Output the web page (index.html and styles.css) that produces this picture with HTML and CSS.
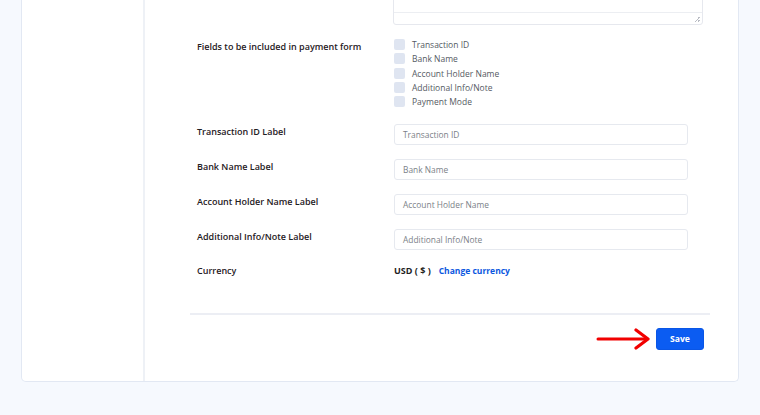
FILE: index.html
```html
<!DOCTYPE html>
<html>
<head>
<meta charset="utf-8">
<link rel="stylesheet" href="styles.css">
</head>
<body>
<div class="card">
  <div class="sidebar"></div>
  <div class="main">
    <div class="row row-ta">
      <div class="label"></div>
      <div class="field">
        <div class="ta">
          <div class="ta-top"></div>
          <div class="ta-bottom"><span class="grip"></span></div>
        </div>
      </div>
    </div>
    <div class="row row-checks">
      <div class="label">Fields to be included in payment form</div>
      <div class="field checks">
        <label class="check"><span class="box"></span>Transaction ID</label>
        <label class="check"><span class="box"></span>Bank Name</label>
        <label class="check"><span class="box"></span>Account Holder Name</label>
        <label class="check"><span class="box"></span>Additional Info/Note</label>
        <label class="check"><span class="box"></span>Payment Mode</label>
      </div>
    </div>
    <div class="row row-input">
      <div class="label">Transaction ID Label</div>
      <div class="field"><div class="input">Transaction ID</div></div>
    </div>
    <div class="row row-input">
      <div class="label">Bank Name Label</div>
      <div class="field"><div class="input">Bank Name</div></div>
    </div>
    <div class="row row-input">
      <div class="label">Account Holder Name Label</div>
      <div class="field"><div class="input">Account Holder Name</div></div>
    </div>
    <div class="row row-input">
      <div class="label">Additional Info/Note Label</div>
      <div class="field"><div class="input">Additional Info/Note</div></div>
    </div>
    <div class="row row-currency">
      <div class="label">Currency</div>
      <div class="field currency"><span class="usd">USD ( $ )</span><a class="change">Change currency</a></div>
    </div>
    <div class="divider"></div>
    <div class="actions">
      <svg class="arrow" width="56" height="22" viewBox="0 0 56 22">
        <path d="M2 11 H51" stroke="#f10000" stroke-width="3" fill="none" stroke-linecap="round"/>
        <path d="M40 2 L52 11 L40 20" stroke="#f10000" stroke-width="3.2" fill="none" stroke-linecap="round" stroke-linejoin="round"/>
      </svg>
      <button class="save">Save</button>
    </div>
  </div>
</div>
</body>
</html>
```
FILE: styles.css
```css
html, body {
  margin: 0;
  padding: 0;
}
body {
  background: #f6f9fe;
  height: 415px;
  overflow: hidden;
  font-family: "Open Sans", "Liberation Sans", sans-serif;
}
.card {
  margin: -20px 21px 0 21px;
  height: 402px;
  background: #fff;
  border: 1px solid #e2e8f3;
  border-top: none;
  border-radius: 0 0 5px 5px;
  display: flex;
  box-sizing: border-box;
}
.sidebar {
  width: 121px;
  border-right: 2px solid #eef1f6;
  flex: none;
}
.main {
  flex: 1;
  padding: 0 28px 0 45px;
  display: flex;
  flex-direction: column;
}
.row {
  display: flex;
  padding-left: 7px;
}
.label {
  width: 197px;
  flex: none;
  font-size: 9px;
  font-weight: 600;
  color: #1f2024;
}
.field {
  flex: 1;
}
.ta {
  width: 310px;
  margin-left: -1px;
  height: 45px;
  border: 1px solid #e6e8ee;
  border-radius: 3px;
  box-sizing: border-box;
  display: flex;
  flex-direction: column;
}
.ta-top {
  height: 31px;
  border-bottom: 1px solid #eceef2;
}
.ta-bottom {
  flex: 1;
  position: relative;
}
.grip {
  position: absolute;
  right: 2px;
  bottom: 2px;
  width: 6px;
  height: 6px;
  background: linear-gradient(135deg, transparent 50%, #b9bcc4 50%, #b9bcc4 60%, transparent 60%, transparent 75%, #b9bcc4 75%, #b9bcc4 85%, transparent 85%);
}
.row-checks {
  margin-top: 14px;
}
.row-checks .label {
  padding-top: 1px;
}
.checks {
  display: flex;
  flex-direction: column;
  gap: 3.3px;
}
.check {
  display: flex;
  align-items: center;
  height: 11px;
  font-size: 8.5px;
  color: #555a63;
}
.box {
  width: 11px;
  height: 11px;
  border-radius: 2px;
  background: #dfe5f1;
  margin-right: 7px;
}
.row-input {
  margin-top: 14px;
}
.row-checks + .row-input {
  margin-top: 17px;
}
.row-input .label {
  padding-top: 1px;
}
.input {
  width: 294px;
  height: 21px;
  box-sizing: border-box;
  border: 1px solid #e6e9ef;
  border-radius: 3px;
  font-size: 8.4px;
  color: #7b7f88;
  padding-left: 8px;
  display: flex;
  align-items: center;
}
.row-currency {
  margin-top: 14px;
}
.currency {
  display: flex;
  align-items: center;
  font-size: 9px;
  font-weight: 700;
}
.usd {
  color: #222;
}
.change {
  color: #0b57e0;
  margin-left: 8px;
  font-size: 8.5px;
}
.divider {
  margin-top: 36px;
  height: 2px;
  background: #eceef4;
}
.actions {
  display: flex;
  justify-content: flex-end;
  align-items: center;
  margin-top: 13px;
  padding-right: 6px;
}
.arrow {
  margin-right: 4px;
}
.save {
  width: 48px;
  height: 22px;
  border: 1px solid #0a56e6;
  border-radius: 3px;
  background: #0b5cf2;
  color: #fff;
  font-family: inherit;
  font-size: 8.6px;
  font-weight: 700;
  padding: 0;
}
```
